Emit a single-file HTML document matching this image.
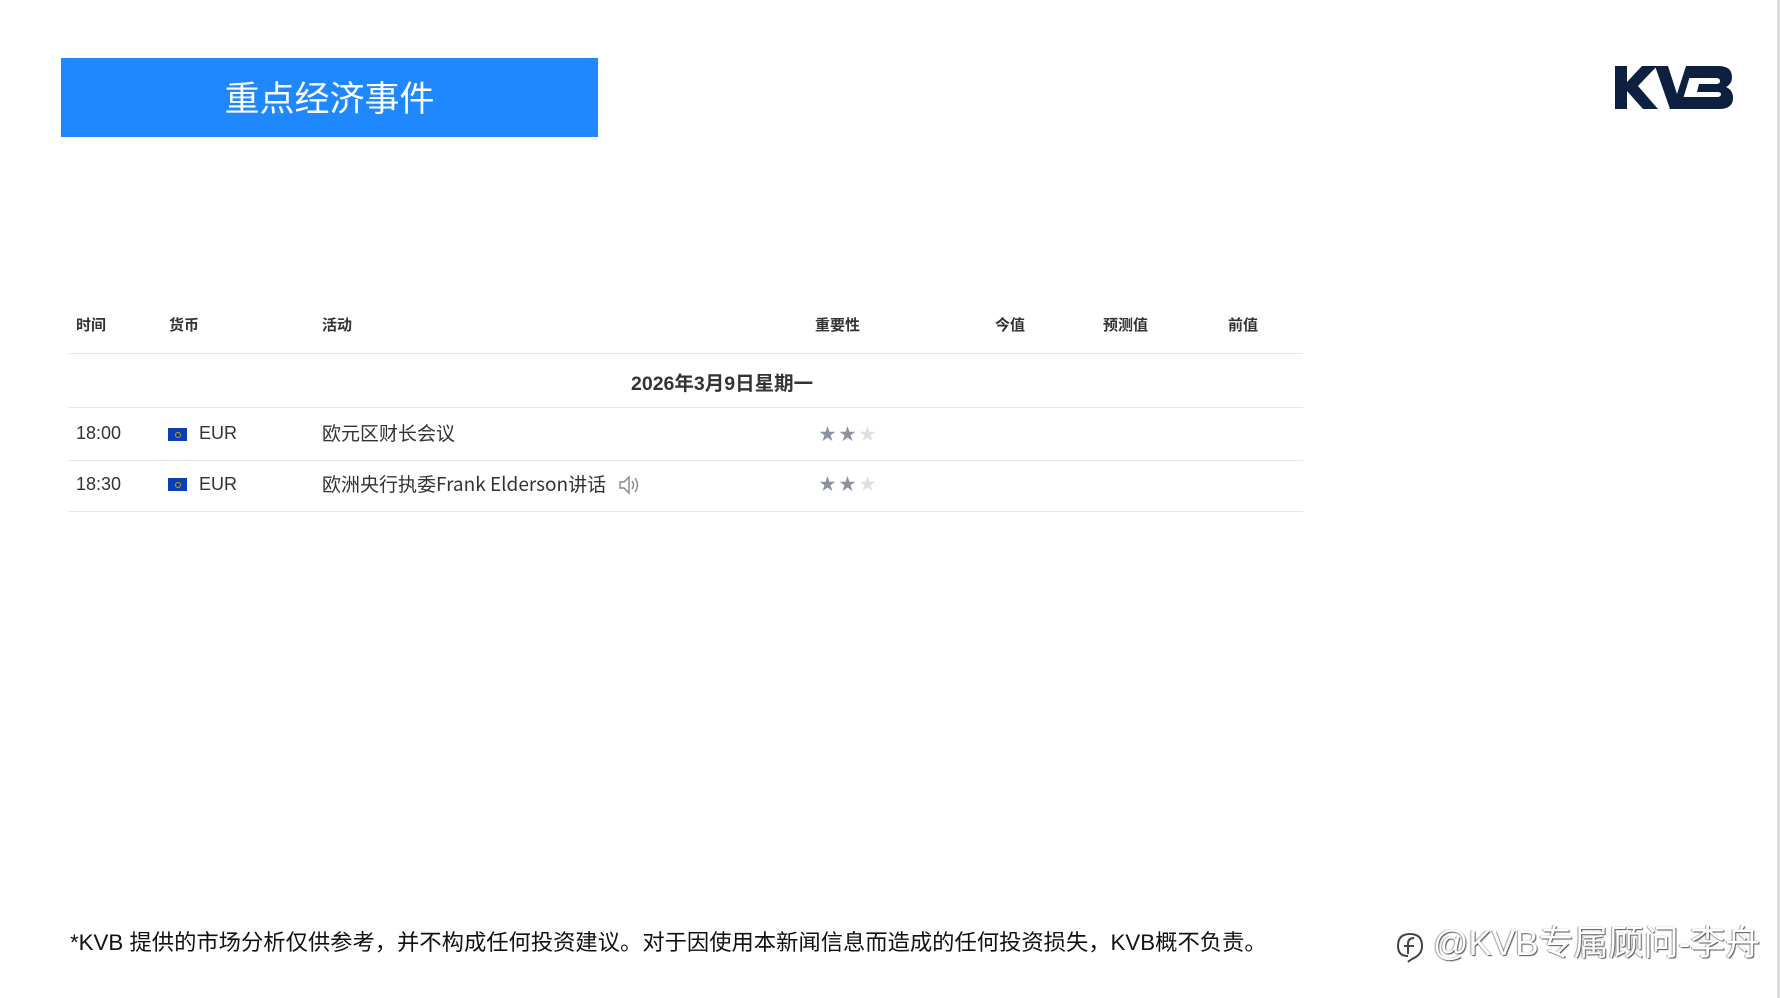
<!DOCTYPE html>
<html><head><meta charset="utf-8"><style>
*{margin:0;padding:0;box-sizing:border-box}
body{width:1780px;height:998px;background:#fff;position:relative;overflow:hidden;font-family:"Liberation Sans","Noto Sans CJK SC",sans-serif;color:#222}
.a{position:absolute;white-space:nowrap}
.title{left:61px;top:58px;width:537px;height:79px;background:#2088ff;color:#fff;font-size:35px;text-align:center;line-height:83px}
.h{font-size:15px;font-weight:bold;color:#333;top:314px}
.line{position:absolute;left:68px;width:1235px;height:1px;background:#e3e8f0}
.r{font-size:18px;color:#333}
.c{font-size:19px;color:#333;font-family:"Noto Sans CJK SC","Liberation Sans",sans-serif}
.flag{position:absolute;width:19px;height:13px;background:#0b3fb5}
.flag:after{content:"";position:absolute;left:7px;top:4px;width:4px;height:4px;border:1px solid #c9a400;border-radius:50%}
.star{position:absolute;font-size:17px;line-height:17px}
</style></head><body>
<div class="a title">重点经济事件</div>
<svg class="a" style="left:1615px;top:66px" width="118" height="43" viewBox="0 0 118 43">
<g fill="#0d203f">
<polygon points="0,0 12,0 12,16 27,0 42,0 23,20 43,43 28,43 12,25 12,43 0,43"/>
<polygon points="40,0 53,0 62,28 71,0 78,0 65,43 55,43"/>
<path d="M76,0 H103 Q117,0 117,11 Q117,18 111,21 Q118,24 118,32 Q118,43 104,43 H64 L68,31 H102 Q106,31 106,28 Q106,26 102,26 H82 L84,18 H101 Q105,18 105,15 Q105,12 101,12 H72 Z"/>
</g></svg>
<div class="a h" style="left:76px">时间</div>
<div class="a h" style="left:169px">货币</div>
<div class="a h" style="left:322px">活动</div>
<div class="a h" style="left:815px">重要性</div>
<div class="a h" style="left:995px">今值</div>
<div class="a h" style="left:1103px">预测值</div>
<div class="a h" style="left:1228px">前值</div>
<div class="line" style="top:353px;box-shadow:0 2px 4px rgba(0,0,0,0.05)"></div>
<div class="a" style="left:631px;top:367px;font-size:19.5px;font-weight:bold;color:#333">2026年3月9日星期一</div>
<div class="line" style="top:407px"></div>
<div class="a r" style="left:76px;top:423px">18:00</div>
<div class="flag" style="left:168px;top:428px"></div>
<div class="a r" style="left:199px;top:423px">EUR</div>
<div class="a c" style="left:322px;top:419px">欧元区财长会议</div>
<div class="star" style="left:819px;top:426px;color:#8c939e">★</div>
<div class="star" style="left:839px;top:426px;color:#8c939e">★</div>
<div class="star" style="left:859px;top:426px;color:#dde0e4">★</div>
<div class="line" style="top:460px"></div>
<div class="a r" style="left:76px;top:474px">18:30</div>
<div class="flag" style="left:168px;top:478px"></div>
<div class="a r" style="left:199px;top:474px">EUR</div>
<div class="a c" style="left:322px;top:470px">欧洲央行执委Frank Elderson讲话</div>
<svg class="a" style="left:618px;top:474px" width="24" height="22" viewBox="0 0 24 22" fill="none" stroke="#888" stroke-width="1.4"><path d="M2,8 H6 L11,3 V19 L6,14 H2 Z"/><path d="M14,7 Q17,11 14,15"/><path d="M17,4 Q22,11 17,18"/></svg>
<div class="star" style="left:819px;top:476px;color:#8c939e">★</div>
<div class="star" style="left:839px;top:476px;color:#8c939e">★</div>
<div class="star" style="left:859px;top:476px;color:#dde0e4">★</div>
<div class="line" style="top:511px"></div>
<div class="a" style="left:70px;top:925px;font-size:22.3px;color:#111">*KVB 提供的市场分析仅供参考，并不构成任何投资建议。对于因使用本新闻信息而造成的任何投资损失，KVB概不负责。</div>
<svg class="a" style="left:1394px;top:924px" width="34" height="40" viewBox="0 0 34 40" fill="none" stroke="#444" stroke-width="2"><path d="M14,32 Q4,32 4,22 Q4,10 16,10 Q28,10 28,22 Q28,30 20,34 Q16,36 14,38"/><path d="M20,14 Q14,14 14,20 V30"/><path d="M10,22 H20"/></svg>
<div class="a" style="left:1433px;top:915px;font-size:35px;color:#fff;text-shadow:1px 1px 1px #555,-1px 0 1px #999">@KVB专属顾问-李舟</div>
<div class="a" style="left:1777px;top:0;width:3px;height:998px;background:#ddd"></div>
</body></html>
